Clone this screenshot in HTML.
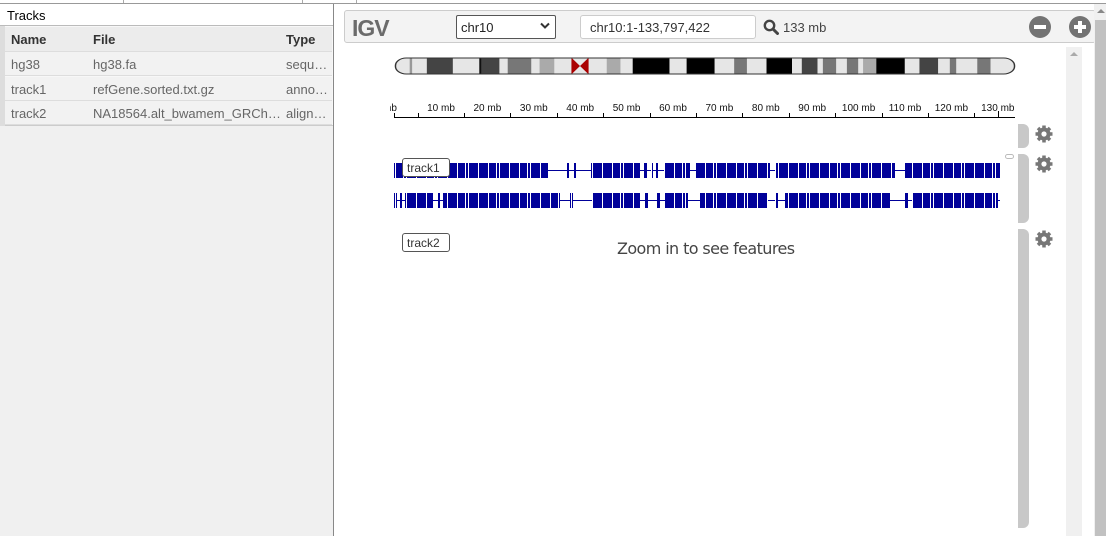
<!DOCTYPE html>
<html><head><meta charset="utf-8"><style>
*{margin:0;padding:0;box-sizing:border-box}
body{width:1106px;height:536px;overflow:hidden;background:#fff;font-family:"Liberation Sans",sans-serif;position:relative}
.a{position:absolute}
.row{position:absolute;left:5px;width:327px;height:24px;border-bottom:1px solid #ddd;background:#f2f2f2;font-size:13px;color:#666}
.row span,.hdr span{position:absolute;top:5px}
.hdr{position:absolute;left:5px;width:327px;top:27px;height:25px;background:#ececec;border-bottom:1px solid #ddd;font-size:13px;font-weight:bold;color:#333}
</style></head><body>
<div class="a" style="left:0;top:3px;width:1106px;height:1px;background:#999"></div>
<div class="a" style="left:123px;top:0;width:1px;height:3px;background:#aaa"></div>
<div class="a" style="left:302px;top:0;width:1px;height:3px;background:#aaa"></div>
<div class="a" style="left:356px;top:0;width:1px;height:3px;background:#aaa"></div>
<div class="a" style="left:0;top:4px;width:334px;height:532px;background:#f0f0f0;border-right:1px solid #888"></div>
<div class="a" style="left:0;top:4px;width:333px;height:22px;background:#fff;border-bottom:1px solid #bbb"></div>
<div class="a" style="left:7px;top:8px;font-size:13px;color:#000">Tracks</div>
<div class="a" style="left:0;top:26px;width:333px;height:100px;background:#f7f7f7;border-bottom:1px solid #ccc"></div>
<div class="a" style="left:0;top:26px;width:5px;height:100px;background:#ddd"></div>
<div class="hdr"><span style="left:6px">Name</span><span style="left:88px">File</span><span style="left:281px">Type</span></div>
<div class="row" style="top:52px"><span style="left:6px">hg38</span><span style="left:88px">hg38.fa</span><span style="left:281px">sequ…</span></div>
<div class="row" style="top:77px"><span style="left:6px">track1</span><span style="left:88px">refGene.sorted.txt.gz</span><span style="left:281px">anno…</span></div>
<div class="row" style="top:101px"><span style="left:6px">track2</span><span style="left:88px">NA18564.alt_bwamem_GRCh…</span><span style="left:281px">align…</span></div>
<div class="a" style="left:344px;top:10px;width:752px;height:33px;background:#f3f3f3;border:1px solid #ccc;border-radius:3px"></div>
<div class="a" style="left:1094px;top:4px;width:12px;height:532px;background:#f0f0f0"></div>
<div class="a" style="left:1095px;top:20px;width:11px;height:516px;background:#c1c1c1"></div>
<div class="a" style="left:1097px;top:9px;width:0;height:0;border-left:4px solid transparent;border-right:4px solid transparent;border-bottom:4px solid #888"></div>
<div class="a" style="left:1066px;top:47px;width:16px;height:489px;background:#f0f0f0"></div>
<div class="a" style="left:1070px;top:52px;width:0;height:0;border-left:4px solid transparent;border-right:4px solid transparent;border-bottom:4px solid #aaa"></div>
<div class="a" style="left:352px;top:15px;font-size:23px;font-weight:bold;color:#6b6b6b;letter-spacing:-1px">IGV</div>
<div class="a" style="left:456px;top:15px;width:100px;height:24px;background:#fff;border:1px solid #555;border-radius:2px;font-size:13px;padding:4px 0 0 4px;color:#222">chr10</div>
<svg class="a" style="left:540px;top:22px" width="10" height="8"><path d="M1 1.5 L5 5.5 L9 1.5" stroke="#333" stroke-width="2" fill="none"/></svg>
<div class="a" style="left:580px;top:15px;width:176px;height:24px;background:#fff;border:1px solid #ccc;border-radius:3px;font-size:13px;padding:4px 0 0 9px;color:#333">chr10:1-133,797,422</div>
<svg class="a" style="left:763px;top:19px" width="16" height="16"><circle cx="6.5" cy="6.5" r="4.7" stroke="#444" stroke-width="2.4" fill="none"/><path d="M10 10 L14.5 14.5" stroke="#444" stroke-width="3" stroke-linecap="round"/></svg>
<div class="a" style="left:783px;top:20px;font-size:13px;color:#444">133 mb</div>
<svg class="a" style="left:1028px;top:15px" width="70" height="25"><circle cx="12" cy="12" r="11" fill="#737373"/><rect x="6" y="10" width="12" height="4" fill="#fff"/><circle cx="52" cy="12" r="11" fill="#737373"/><rect x="46" y="10" width="12" height="4" fill="#fff"/><rect x="50" y="6" width="4" height="12" fill="#fff"/></svg>
<svg class="a" style="left:394px;top:57px" width="622" height="18" viewBox="118 172 1269 52" preserveAspectRatio="none">
<defs><clipPath id="cp"><rect x="121" y="175" width="1263" height="46" rx="22"/></clipPath></defs>
<g clip-path="url(#cp)">
<rect x="120" y="174" width="1266" height="48" fill="#e6e6e6"/>
<rect x="150" y="174" width="5" height="48" fill="#999"/>
<rect x="185" y="174" width="53" height="48" fill="#444"/>
<rect x="292" y="174" width="5" height="48" fill="#111"/>
<rect x="297" y="174" width="36" height="48" fill="#444"/>
<rect x="350" y="174" width="48" height="48" fill="#777"/>
<rect x="415" y="174" width="30" height="48" fill="#aaa"/>
<path d="M480 174 L515 222 L515 174 L480 222 Z" fill="#a00"/>
<rect x="552" y="174" width="28" height="48" fill="#aaa"/>
<rect x="605" y="174" width="75" height="48" fill="#000"/>
<rect x="715" y="174" width="57" height="48" fill="#000"/>
<rect x="812" y="174" width="26" height="48" fill="#777"/>
<rect x="878" y="174" width="52" height="48" fill="#000"/>
<rect x="950" y="174" width="32" height="48" fill="#444"/>
<rect x="993" y="174" width="27" height="48" fill="#777"/>
<rect x="1042" y="174" width="23" height="48" fill="#777"/>
<rect x="1075" y="174" width="27" height="48" fill="#aaa"/>
<rect x="1102" y="174" width="58" height="48" fill="#000"/>
<rect x="1190" y="174" width="38" height="48" fill="#444"/>
<rect x="1252" y="174" width="13" height="48" fill="#777"/>
<rect x="1308" y="174" width="27" height="48" fill="#777"/>
</g>
<rect x="121" y="175" width="1263" height="46" rx="22" fill="none" stroke="#333" stroke-width="3"/>
</svg>
<svg class="a" style="left:390px;top:98px" width="630" height="24" font-family="Liberation Sans" font-size="10" fill="#111">
<rect x="4" y="19" width="621" height="1" fill="#000"/>
<text x="-7" y="13">mb</text>
<g text-anchor="middle">
<text x="51" y="13">10 mb</text><text x="97.4" y="13">20 mb</text><text x="143.8" y="13">30 mb</text><text x="190.2" y="13">40 mb</text><text x="236.6" y="13">50 mb</text><text x="283" y="13">60 mb</text><text x="329.4" y="13">70 mb</text><text x="375.8" y="13">80 mb</text><text x="422.2" y="13">90 mb</text><text x="468.6" y="13">100 mb</text><text x="515" y="13">110 mb</text><text x="561.4" y="13">120 mb</text><text x="607.8" y="13">130 mb</text>
</g>
<g fill="#000">
<rect x="4" y="15" width="1" height="4"/><rect x="28" y="15" width="1" height="4"/><rect x="74" y="15" width="1" height="4"/><rect x="120" y="15" width="1" height="4"/><rect x="167" y="15" width="1" height="4"/><rect x="213" y="15" width="1" height="4"/><rect x="260" y="15" width="1" height="4"/><rect x="306" y="15" width="1" height="4"/><rect x="352" y="15" width="1" height="4"/><rect x="399" y="15" width="1" height="4"/><rect x="445" y="15" width="1" height="4"/><rect x="492" y="15" width="1" height="4"/><rect x="538" y="15" width="1" height="4"/><rect x="584" y="15" width="1" height="4"/><rect x="608" y="13" width="1" height="6"/>
</g>
</svg>
<div class="a" style="left:1018px;top:124px;width:11px;height:24px;background:#c8c8c8;border-radius:0 6px 6px 0"></div>
<div class="a" style="left:1018px;top:154px;width:11px;height:69px;background:#c8c8c8;border-radius:0 6px 6px 0"></div>
<div class="a" style="left:1018px;top:229px;width:11px;height:299px;background:#c8c8c8;border-radius:0 6px 6px 0"></div>
<div class="a" style="left:1005px;top:154px;width:9px;height:5px;border:1px solid #bbb;border-radius:3px"></div>
<svg class="a" style="left:1034px;top:124px" width="20" height="126">
<defs><g id="g"><circle cx="10" cy="10" r="6.5" fill="#777"/><g stroke="#777" stroke-width="3.5"><path d="M10 1.5V18.5M1.5 10H18.5M4 4L16 16M16 4L4 16"/></g><circle cx="10" cy="10" r="2.6" fill="#fff"/></g></defs>
<use href="#g" y="0"/><use href="#g" y="30"/><use href="#g" y="105"/>
</svg>
<svg class="a" style="left:390px;top:160px" width="615" height="52">
<defs><pattern id="p" width="31" height="30" patternUnits="userSpaceOnUse"><rect width="31" height="30" fill="#000099"/><rect x="5" width="1" height="30" fill="#fff"/><rect x="13" width="1" height="30" fill="#fff"/><rect x="16" width="1" height="30" fill="#fff"/><rect x="26" width="1" height="30" fill="#fff"/></pattern></defs>
<g fill="#000099">
<rect x="4" y="10" width="606" height="1"/>
<rect x="4" y="40" width="606" height="1"/>
</g>
<g fill="url(#p)">
<rect x="4" y="3" width="154" height="15"/><rect x="177" y="3" width="2" height="15"/><rect x="184" y="3" width="2" height="15"/>
<rect x="201" y="3" width="49" height="15"/><rect x="254" y="3" width="3" height="15"/><rect x="261" y="3" width="2" height="15"/><rect x="266" y="3" width="2" height="15"/>
<rect x="274" y="3" width="26" height="15"/><rect x="306" y="3" width="74" height="15"/><rect x="385" y="3" width="120" height="15"/><rect x="515" y="3" width="95" height="15"/>
<rect x="4" y="33" width="3" height="15"/><rect x="10" y="33" width="2" height="15"/><rect x="15" y="33" width="28" height="15"/><rect x="48" y="33" width="2" height="15"/>
<rect x="53" y="33" width="117" height="15"/><rect x="180" y="33" width="3" height="15"/><rect x="202" y="33" width="48" height="15"/><rect x="255" y="33" width="3" height="15"/>
<rect x="267" y="33" width="3" height="15"/><rect x="275" y="33" width="23" height="15"/><rect x="310" y="33" width="68" height="15"/><rect x="385" y="33" width="3" height="15"/>
<rect x="395" y="33" width="105" height="15"/><rect x="515" y="33" width="3" height="15"/><rect x="522" y="33" width="86" height="15"/>
</g>
</svg>
<div class="a" style="left:402px;top:158px;width:48px;height:19px;background:#fff;border:1px solid #555;border-radius:3px;font-size:12px;color:#333;padding:2px 0 0 4px">track1</div>
<div class="a" style="left:402px;top:233px;width:48px;height:19px;background:#fff;border:1px solid #555;border-radius:3px;font-size:12px;color:#333;padding:2px 0 0 4px">track2</div>
<div class="a" style="left:617px;top:239px;font-size:16px;color:#444;font-family:'DejaVu Sans','Liberation Sans',sans-serif;letter-spacing:-0.6px">Zoom in to see features</div>
</body></html>
